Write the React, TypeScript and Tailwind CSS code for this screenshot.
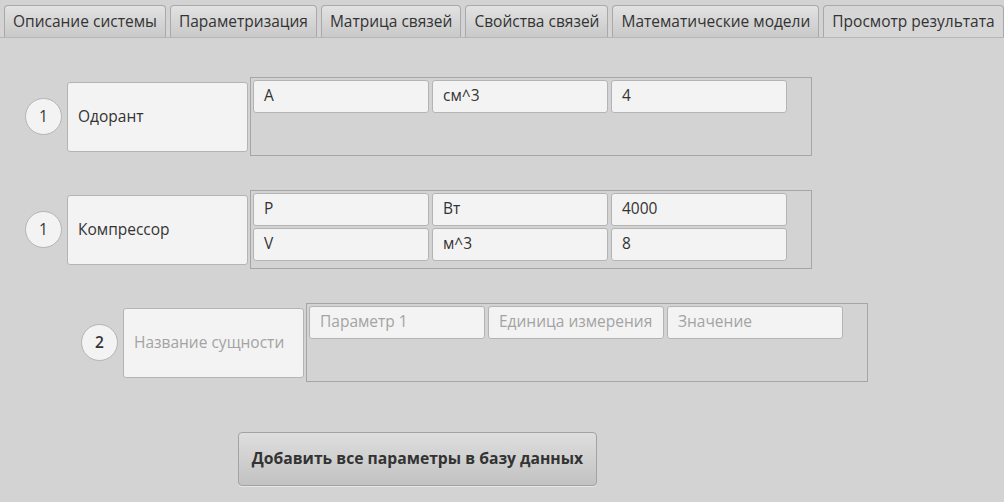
const tabs = [
  "Описание системы",
  "Параметризация",
  "Матрица связей",
  "Свойства связей",
  "Математические модели",
  "Просмотр результата",
];

type Entity = {
  num: string;
  name: string;
  placeholder?: boolean;
  params: string[][];
  indent: string;
};

const entities: Entity[] = [
  { num: "1", name: "Одорант", params: [["A", "см^3", "4"]], indent: "pl-[25px]" },
  {
    num: "1",
    name: "Компрессор",
    params: [
      ["P", "Вт", "4000"],
      ["V", "м^3", "8"],
    ],
    indent: "pl-[25px]",
  },
  {
    num: "2",
    name: "Название сущности",
    placeholder: true,
    params: [["Параметр 1", "Единица измерения", "Значение"]],
    indent: "pl-[81px]",
  },
];

function EntityRow({ e }: { e: Entity }) {
  const txt = e.placeholder ? "text-[#a3a3a3]" : "text-[#333]";
  return (
    <div className={`flex items-center ${e.indent}`}>
      <div
        className={`w-[37px] h-[37px] rounded-full bg-[#f3f3f3] border border-[#b4b4b4] flex items-center justify-center text-[15.5px] text-[#333] ${
          e.placeholder ? "font-semibold" : ""
        }`}
      >
        {e.num}
      </div>
      <div
        className={`ml-[5px] w-[181px] h-[70px] rounded-[3px] bg-[#f3f3f3] border border-[#b4b4b4] flex items-center pl-[10px] text-[15.5px] ${txt}`}
      >
        {e.name}
      </div>
      <div className="ml-[2px] w-[562px] h-[79px] border border-[#a6a6a6] p-[2px] flex flex-col gap-[2px]">
        {e.params.map((row, i) => (
          <div key={i} className="flex gap-[3px]">
            {row.map((cell, j) => (
              <div
                key={j}
                className={`w-[176px] h-[33px] rounded-[3px] bg-[#f3f3f3] border border-[#b4b4b4] flex items-center pl-[10px] pb-[1px] text-[15.5px] ${txt}`}
              >
                {cell}
              </div>
            ))}
          </div>
        ))}
      </div>
    </div>
  );
}

export default function App() {
  return (
    <div
      className="w-[1004px] h-[502px] bg-[#d3d3d3] overflow-hidden"
      style={{ fontFamily: "'Open Sans', 'Noto Sans', sans-serif" }}
    >
      <div className="flex gap-[4px] pl-[4px] pt-[5px] border-b border-[#b6b6b6] bg-[#d3d3d3]">
        {tabs.map((t, i) => {
          const active = i === tabs.length - 1;
          return (
            <div
              key={t}
              className={`h-[32px] px-[8px] flex items-center rounded-t-[4px] border border-b-0 border-[#a9a9a9] text-[15.5px] text-[#333] ${
                active
                  ? "bg-[#d6d6d6]"
                  : "bg-gradient-to-b from-[#e2e2e2] to-[#c9c9c9]"
              }`}
            >
              {t}
            </div>
          );
        })}
      </div>
      <div className="pt-[39px] flex flex-col gap-[34px]">
        {entities.map((e, i) => (
          <EntityRow key={i} e={e} />
        ))}
      </div>
      <div className="pl-[238px] pt-[50px]">
        <button className="w-[359px] h-[54px] rounded-[4px] border border-[#a3a3a3] bg-gradient-to-b from-[#dedede] to-[#c2c2c2] text-[15.7px] font-bold text-[#333] shadow-[0_1px_0_#e6e6e6]">
          Добавить все параметры в базу данных
        </button>
      </div>
    </div>
  );
}
